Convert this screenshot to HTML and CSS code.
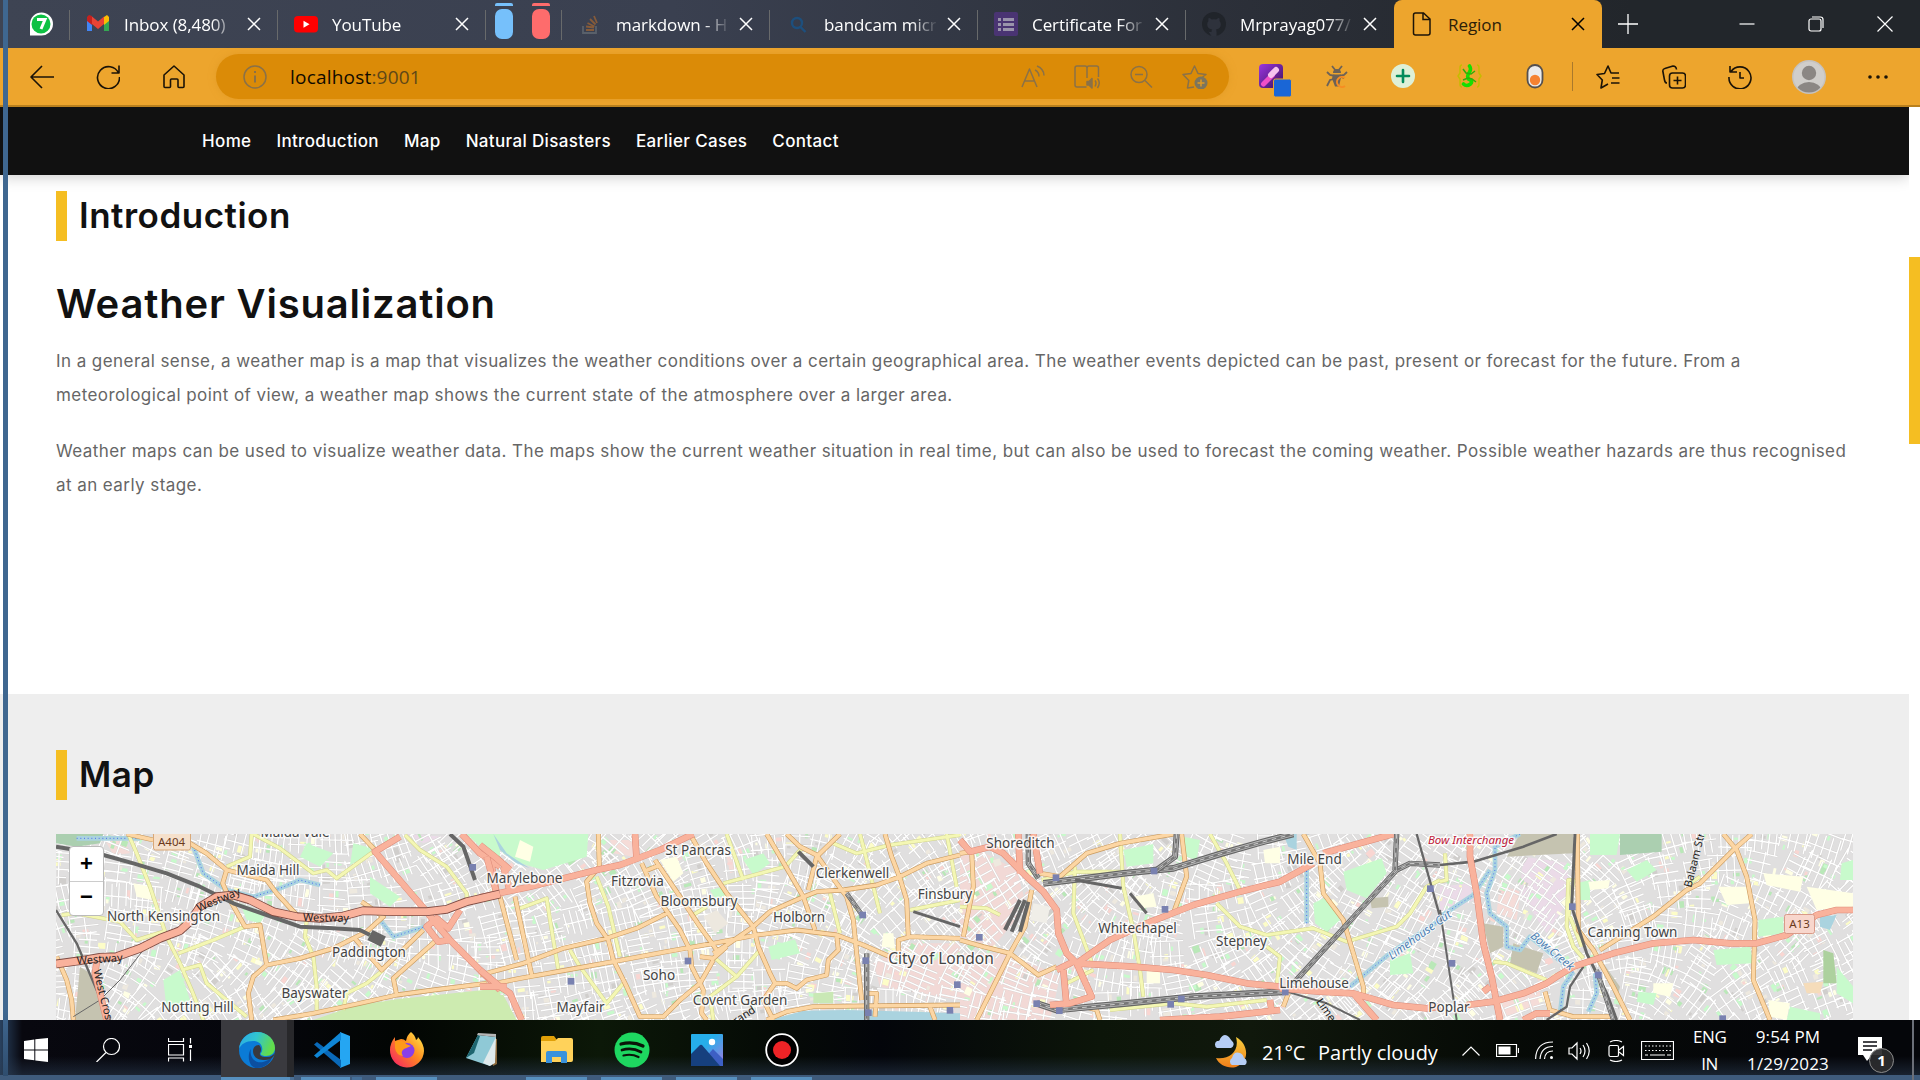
FILE: index.html
```html
<!DOCTYPE html>
<html lang="en">
<head>
<meta charset="utf-8">
<title>Region</title>
<link rel="stylesheet" href="styles.css">
</head>
<body>
<div class="desktop">
  <header class="tabstrip">
    <div class="tab pinned">
      <svg width="26" height="26" viewBox="0 0 26 26"><path d="M2 24.500V13A11.500 11.500 0 1 1 13 24.500Z" fill="#fff"/><circle cx="13" cy="13" r="9.500" fill="#0dc143"/><path d="M9 8.500h8l-4 9.500" fill="none" stroke="#fff" stroke-width="3"/></svg>
    </div>
    <div class="tab">
      <svg class="fav" viewBox="0 0 24 24"><path d="M1 5v14h5V9z" fill="#4285f4"/><path d="M23 5v14h-5V9z" fill="#34a853"/><path d="M18 5l3-2 2 2v4l-5 4z" fill="#fbbc04"/><path d="M1 5l2-2 3 1v9l-5-4z" fill="#c5221f"/><path d="M6 4.500l6 5 6-5V12l-6 5-6-5z" fill="#ea4335"/></svg>
      <span class="title">Inbox (8,480)</span><svg class="close"><use href="#x"/></svg>
    </div>
    <div class="tab">
      <svg class="fav" viewBox="0 0 24 24"><rect y="4" width="24" height="16.500" rx="4" fill="#f00"/><path d="M9.500 8.700v7l6-3.500z" fill="#fff"/></svg>
      <span class="title">YouTube</span><svg class="close"><use href="#x"/></svg>
    </div>
    <div class="tab groups"><i class="pill blue"></i><i class="pill red"></i></div>
    <div class="tab">
      <svg class="fav" viewBox="0 0 24 24" fill="none" stroke-width="1.800"><path d="M5 14v7h13v-7" stroke="#59606a"/><path d="M8 18h8M8 14.500l8 1M9.500 11l7 3.500M12 7l5.500 5.500M16 4l3 7" stroke="#865b3a"/></svg>
      <span class="title">markdown - H</span><svg class="close"><use href="#x"/></svg>
    </div>
    <div class="tab">
      <svg class="fav" viewBox="0 0 24 24" fill="none" stroke="#1d4f7d" stroke-width="2.400"><circle cx="11" cy="11" r="5"/><path d="M14.500 15l5 5"/></svg>
      <span class="title">bandcam micr</span><svg class="close"><use href="#x"/></svg>
    </div>
    <div class="tab">
      <svg class="fav" viewBox="0 0 24 24"><rect width="24" height="24" rx="2" fill="#4a3473"/><path d="M4 6h3v3H4zM9 6h11v3H9zM4 11h3v3H4zM9 11h11v3H9zM4 16h3v3H4zM9 16h11v3H9z" fill="#9a94ab"/></svg>
      <span class="title">Certificate For</span><svg class="close"><use href="#x"/></svg>
    </div>
    <div class="tab">
      <svg class="fav" viewBox="0 0 24 24"><circle cx="12" cy="12" r="12" fill="#20242a"/><path d="M9.500 24v-4c-2 .3-3.500-.5-4-2M14.500 24v-4.500c0-.8-.2-1.500-.7-2 3-.4 5-1.800 5-5 0-1.500-.5-2.500-1.300-3.400.2-.8.2-2-.2-3-1 0-2.200.7-3 1.300a10 10 0 0 0-4.600 0c-.9-.6-2-1.300-3-1.300-.5 1-.5 2.200-.2 3A5 5 0 0 0 5.200 12.500c0 3.200 2 4.600 5 5-.5.500-.7 1.200-.7 2.500V24z" fill="#2e323c"/></svg>
      <span class="title">Mrprayag077/</span><svg class="close"><use href="#x"/></svg>
    </div>
    <div class="tab active">
      <svg class="fav line" viewBox="0 0 24 24"><path d="M3.500 3q0-2 2-2h8l6.500 6v14q0 2-2 2h-12.500q-2 0-2-2zM13 1v6.500h7"/></svg>
      <span class="title">Region</span><svg class="close"><use href="#x"/></svg>
    </div>
    <svg class="newtab" width="22" height="22" viewBox="0 0 22 22"><path d="M11 1v20M1 11h20"/></svg>
    <div class="winbtns">
      <svg width="16" height="16" viewBox="0 0 16 16"><path d="M.5 8h15"/></svg>
      <svg width="16" height="16" viewBox="0 0 16 16"><rect x="1" y="3" width="12" height="12" rx="2"/><path d="M4 1h8.500Q15 1 15 3.500V12"/></svg>
      <svg width="16" height="16" viewBox="0 0 16 16"><path d="M.5.500l15 15m0-15l-15 15"/></svg>
    </div>
  </header>

  <div class="toolbar">
    <svg class="tb" viewBox="0 0 24 24"><path d="M24 12H1M12 1L1 12l11 11"/></svg>
    <svg class="tb" viewBox="0 0 24 24"><path d="M22.500 8A11 11 0 1 0 23.500 12M23 .5V8h-7.500"/></svg>
    <svg class="tb" viewBox="0 0 24 24"><path d="M2 10l10-9 10 9v11.500q0 1-1 1h-4q-1 0-1-1V15q0-1-1-1H9.500q-1 0-1 1v6.500q0 1-1 1H3q-1 0-1-1z"/></svg>
    <div class="address">
      <svg class="ai" viewBox="0 0 24 24"><circle cx="12" cy="12" r="11"/><path d="M12 10.500v7M12 6v2" stroke-width="2"/></svg>
      <span class="url">localhost<span>:9001</span></span>
      <svg class="ai" viewBox="0 0 24 24"><path d="M1 22L8.500 4 16 22M4 16h9.500M14 5q4 2 4 6.500M16 1q7 3 7 9.500"/></svg>
      <svg class="ai wide" viewBox="0 0 26 24"><path d="M12.500 22H3q-2 0-2-2V3q0-2 2-2h8q2 0 2 2v10M13 3q0-2 2-2h7.500q2 0 2 2v9"/><path d="M13 16.500h2l3-3v9.500l-3-3h-2z" fill="#8a7148"/><path d="M21 15.500q2 2.500 0 6M23.500 13.500q3.500 4 0 9.500"/></svg>
      <svg class="ai" viewBox="0 0 24 24"><circle cx="10" cy="9.500" r="8"/><path d="M6 9.500h8M16 15.500l7 7"/></svg>
      <svg class="ai wide" viewBox="0 0 26 24"><path d="M12 22l-6.500 1 1.300-7.500L1 9.500l8-1L12.500 1 16 8.500l8 1-3.500 2.500"/><circle cx="19" cy="18" r="6.500" fill="#7c755e" stroke="none"/><path d="M19 14.500v7M15.500 18h7" stroke="#e09a24"/></svg>
    </div>
    <div class="exts">
      <svg class="ext" viewBox="0 0 34 34"><defs><linearGradient id="pp" x1="0" y1="0" x2="1" y2="1"><stop stop-color="#9b35e0"/><stop offset="1" stop-color="#3c125c"/></linearGradient></defs><rect width="24" height="24" rx="4" fill="url(#pp)"/><path d="M4.500 20l9-9" stroke="#f04fc8" stroke-width="5" stroke-linecap="round"/><path d="M12 11l5-5" stroke="#f5c2ee" stroke-width="6" stroke-linecap="round"/><rect x="14.500" y="15" width="18" height="18" rx="2" fill="#1a66d6" stroke="#eda52d"/></svg>
      <svg class="ext" viewBox="0 0 34 34"><g fill="none" stroke="#6d6257" stroke-width="1.800"><path d="M7 2l4 5M17 2l-4 5M2 8l3 3 5 1M22 8l-3 3-5 1M2 22l3-6 4-1M19 14l-3-1"/></g><path d="M8 9q0-4 4-4t4 4zM8 10.500h8v3l-2 9h-4l-3-8z" fill="#6d6257"/><path d="M20 14a5 5 0 1 0 0 8" fill="none" stroke="#f78d22" stroke-width="2"/></svg>
      <svg class="ext" viewBox="0 0 34 34"><circle cx="12" cy="12" r="12" fill="#def0d8"/><path d="M12 6v12M6 12h12" stroke="#038b5c" stroke-width="2.600" stroke-linecap="round"/></svg>
      <svg class="ext" viewBox="0 0 34 34"><path d="M5 1Q3 1 3 4v5l-2 3 2 3v5q0 3 2 3M20 1q2 0 2 3v5l2 3-2 3v5q0 3-2 3" fill="none" stroke="#c6bb00" stroke-width="1.500"/><path d="M12.500 2q2 3 0 6-3 4-1 7 5 2 2 5-4 3-7 0" fill="none" stroke="#16df00" stroke-width="3.600" stroke-linecap="round"/><path d="M6 5l3 4 5 1 4-3M6 16l5-2 4 1 4 3" fill="none" stroke="#2fae0c" stroke-width="1.500"/></svg>
      <svg class="ext" viewBox="0 0 34 34"><rect x="4.500" y="1" width="15" height="22.500" rx="7.500" fill="#ececec" stroke="#55504e" stroke-width="1.800"/><circle cx="12" cy="16" r="5.200" fill="#f58231"/></svg>
    </div>
    <i class="tbsep"></i>
    <div class="actions">
      <svg class="tb" viewBox="0 0 24 24"><path d="M12 19l-7 4 1.300-8L1 9.500l7.500-1L12 1l3 7h8M16 13h7.500M15 18h8.500"/></svg>
      <svg class="tb" viewBox="0 0 24 24"><rect x="7.500" y="8" width="16" height="15" rx="3"/><path d="M15.500 11.500v8M11.500 15.500h8M5 18Q3 18 2.500 15L.8 6q0-2 2-2.500L11 1q3 0 3.500 3.500"/></svg>
      <svg class="tb" viewBox="0 0 24 24"><path d="M3 6.500A11 11 0 1 1 1 12M2 1v6h7M12 7v6h4"/></svg>
      <svg class="avatar" viewBox="0 0 34 34"><defs><clipPath id="av"><circle cx="17" cy="17" r="15.500"/></clipPath></defs><circle cx="17" cy="17" r="17" fill="#c5c2bf"/><circle cx="17" cy="17" r="15.500" fill="#d0cecb"/><circle cx="17" cy="13" r="7.200" fill="#8b8784"/><ellipse cx="17" cy="31" rx="12.500" ry="9" fill="#8b8784" clip-path="url(#av)"/></svg>
      <svg class="tb dots" viewBox="0 0 24 24"><circle cx="4" cy="12" r="1.800"/><circle cx="12" cy="12" r="1.800"/><circle cx="20" cy="12" r="1.800"/></svg>
    </div>
  </div>

  <main class="viewport">
    <div class="page">
      <nav class="nav"><a>Home</a><a>Introduction</a><a>Map</a><a>Natural Disasters</a><a>Earlier Cases</a><a>Contact</a></nav>
      <section class="intro">
        <h2 class="heading">Introduction</h2>
        <h1>Weather Visualization</h1>
        <p>In a general sense, a weather map is a map that visualizes the weather conditions over a certain geographical area. The weather events depicted can be past, present or forecast for the future. From a meteorological point of view, a weather map shows the current state of the atmosphere over a larger area.</p>
        <p>Weather maps can be used to visualize weather data. The maps show the current weather situation in real time, but can also be used to forecast the coming weather. Possible weather hazards are thus recognised at an early stage.</p>
      </section>
      <section class="mapsec">
        <h2 class="heading">Map</h2>
        <div class="map">
          <svg id="map" width="1797" height="186" viewBox="56 834 1797 186"></svg>
          <div class="zoomctl"><span>+</span><span>−</span></div>
        </div>
      </section>
    </div>
    <div class="scroll"><i></i></div>
  </main>

  <footer class="taskbar">
    <div class="start">
      <svg width="24" height="24" viewBox="0 0 24 24" fill="#fff"><path d="M0 3l10.300-1.500v10H0zM11.300 1.300L24 0v11.500H11.300zM0 12.500h10.300v9.800L0 21zM11.300 12.500H24V24l-12.700-1.500z"/></svg>
      <svg width="24" height="24" viewBox="0 0 24 24" class="w"><circle cx="15.500" cy="8.500" r="8"/><path d="M10 14.500L.5 24"/></svg>
      <svg width="24" height="24" viewBox="0 0 24 24" class="w"><path d="M.5 0v3.500h15V0M.5 6.500h15v10.500h-15zM.5 23.500V20h15v3.500M22.500 0v5.500M22.500 11.500V23"/><path d="M21 7h3v3h-3z" fill="#fff" stroke="none"/></svg>
    </div>
    <div class="apps">
      <div class="app on"><svg viewBox="0 0 36 36"><defs><linearGradient id="e1" x1="0" x2="1" y2=".3"><stop stop-color="#2aa8e8"/><stop offset=".5" stop-color="#31c4d0"/><stop offset="1" stop-color="#62dc4c"/></linearGradient></defs><circle cx="18" cy="18" r="18" fill="#0b7bd6"/><path d="M0 17C1 7 9 0 18 0c11 0 18 8 18 16 0 5-4 8-9 8-5 0-6-2-5-3 3-4 1-12-8-12C7 9 2 12 0 17z" fill="url(#e1)"/><path d="M12 17c-2 8 4 15 12 13 4-1 7-3 9-5-1 6-8 11-15 11C9 36 8 22 12 17z" fill="#0c4fa0"/><path d="M14 19c0-4 3-6 6-6 3 3 2 6 1 8-1 3 3 4 7 4 4 0 6-2 8-4-1 4-4 7-10 7-7 0-12-3-12-9z" fill="#39393d"/></svg></div>
      <div class="app two"><svg viewBox="0 0 36 36"><path d="M26 0l10 4v28l-10 4z" fill="#25a6f2"/><path d="M0 12.500l3-2.500L27 28v8z" fill="#0a69b8"/><path d="M0 23.500L3 26 27 8V0z" fill="#0f86d6"/></svg></div>
      <div class="app"><svg viewBox="0 0 36 36"><defs><linearGradient id="f1" x1="1" y1="0" x2="0" y2="1"><stop stop-color="#fff44f"/><stop offset=".45" stop-color="#ff8a20"/><stop offset="1" stop-color="#f5156c"/></linearGradient></defs><path d="M22 0q4 3 5 8 2-1 2-3 6 7 6 14A17 17 0 0 1 1 18q0-7 5-13v4l6-2q3 0 5 2 1-6 5-9z" fill="url(#f1)"/><circle cx="18" cy="18.500" r="7.500" fill="#8a3fe8"/><path d="M6 9q8-2 11 3l5 2-7 3q-4 3-1 7-7-1-8-8z" fill="#ff9a1a"/></svg></div>
      <div class="app off"><svg viewBox="0 0 36 36"><path d="M27 6l6 1v25l-4 2z" fill="#8c6a3c"/><path d="M14 3l18 2-6 29L2 26z" fill="#8fc9d6"/><path d="M14 3l-12 23 8-5 6-17z" fill="#1d6670"/><path d="M32 5l-1 26-5 3-7-3z" fill="#dfeaec"/><path d="M13 3l19 2v-3L14 1z" fill="#b5b5b5"/></svg></div>
      <div class="app"><svg viewBox="0 0 36 36"><path d="M2 6q0-2 2-2h11l3 4v4H2z" fill="#e0a008"/><path d="M2 9h14l3-3h13q2 0 2 2v20q0 2-2 2H2z" fill="#ffd25a"/><path d="M7 31V21q0-2 2-2h17q2 0 2 2v10h-6v-6h-9v6z" fill="#3a92dc"/></svg></div>
      <div class="app"><svg viewBox="0 0 36 36"><circle cx="18" cy="18" r="17.500" fill="#1ed760"/><g fill="none" stroke="#0a1408" stroke-linecap="round"><path d="M7 12q12-3 22 2" stroke-width="3.200"/><path d="M8 18q10-3 19 2" stroke-width="2.700"/><path d="M9.500 23.500q8-2 15 1.500" stroke-width="2.200"/></g></svg></div>
      <div class="app"><svg viewBox="0 0 36 36"><defs><linearGradient id="ph" x1="0" x2="1" y1="0" y2="1"><stop offset=".4" stop-color="#26aeea"/><stop offset="1" stop-color="#a678e0"/></linearGradient></defs><rect x="2" y="2" width="32" height="32" rx="1" fill="url(#ph)"/><path d="M16 26l8-9 10 10v7H16z" fill="#3d5fc4"/><path d="M2 22l9-9q1-.5 2 0l18 21H2z" fill="#16407e"/><circle cx="23" cy="10" r="3.200" fill="#fff"/></svg></div>
      <div class="app"><svg viewBox="0 0 36 36"><circle cx="18" cy="18" r="15.800" fill="#000" stroke="#fff" stroke-width="1.800"/><circle cx="18" cy="18" r="9" fill="#ee2326"/></svg></div>
    </div>
    <div class="tray">
      <svg width="36" height="34" viewBox="0 0 36 34"><defs><linearGradient id="mo" y2="1" x2="0"><stop stop-color="#f7ce3e"/><stop offset="1" stop-color="#f07e1a"/></linearGradient></defs><path d="M23 3c13 7 14 25 0 30-8 2-17-2-20-9 13 2 24-7 20-21z" fill="url(#mo)"/><path d="M4 14a4 4 0 0 1 0-7q3 0 3-2 4-7 9-2 2 3 3 4a4 4 0 0 1-1 7zM19 31a4 4 0 0 1 0-7q2-7 8-5 3 1 4 5a4 4 0 0 1 1 7z" fill="#b5cdf5"/></svg>
      <span class="temp">21°C</span><span class="cond">Partly cloudy</span>
      <svg class="w" width="18" height="10" viewBox="0 0 18 10"><path d="M.5 9.500L9 1l8.500 8.500"/></svg>
      <svg class="w bat" width="23" height="13" viewBox="0 0 23 13"><path d="M.5.500h20v12H.5zM22.500 4v5"/><path d="M2.500 2.500h12v8h-12z" fill="#fff" stroke="none"/></svg>
      <svg class="w wifi" width="19" height="19" viewBox="0 0 19 19"><path d="M.6 18Q1 1 18 1M5 18Q6 5.500 18 5.500M9.500 18Q10 10 18 10"/><circle cx="16.500" cy="16.500" r="1.500" fill="#fff" stroke="none"/></svg>
      <svg class="w spk" width="23" height="20" viewBox="0 0 23 20"><path d="M1 7h3l5-5v16l-5-5H1zM12 7q2 3 0 6M15 4q4 6 0 12M18.500 2q5.500 8 0 16"/></svg>
      <svg class="w meet" width="17" height="22" viewBox="0 0 17 22"><rect x="1" y="5.500" width="9.500" height="11" rx="1.500"/><path d="M11 10l4.500-3.500v9L11 12M2 2q6-3 12 0M2 20q6 3 12 0"/></svg>
      <svg class="w kb" width="33" height="19" viewBox="0 0 33 19"><path d="M.5.500h32v18H.5z"/><path d="M4 5h26M4 9.500h26" stroke-dasharray="1.500 2"/><path d="M4 14h3M9 14h15M26 14h4"/></svg>
      <div class="stack lang"><span>ENG</span><span>IN</span></div>
      <div class="stack clock"><span>9:54 PM</span><span>1/29/2023</span></div>
      <div class="notif"><svg width="24" height="24" viewBox="0 0 24 24"><path d="M0 0h24v18H14l-5 6-4-6H0z" fill="#fff"/><path d="M5 5h14M5 9h14M5 13h9" stroke="#0a0a0f" stroke-width="1.300"/></svg><b>1</b></div>
    </div>
  </footer>
  <i class="edge"></i>
</div>
<svg width="0" height="0" class="sprite"><symbol id="x" viewBox="0 0 14 14"><path d="M1 1l12 12M13 1L1 13"/></symbol></svg>
<script src="map.js"></script>
</body>
</html>
```
FILE: styles.css
```css
* { box-sizing: border-box; }
body { margin: 0; background: #fff; overflow: hidden; font-family: "Open Sans", "Noto Sans", sans-serif; }
svg { display: block; flex: none; }
.sprite { position: absolute; }
.desktop { position: relative; width: 1920px; height: 1080px; display: flex; flex-direction: column; }

/* tab strip */
.tabstrip { height: 48px; flex: none; display: flex; align-items: stretch; color: #fff; font-size: 17px;
  background: linear-gradient(90deg, #3e4453, #3a4050 35%, #2b2f38 65%, #22262b 85%); }
.tab { width: 208px; display: flex; align-items: center; padding: 0 15px 0 16px; position: relative; }
.tab::after { content: ""; position: absolute; right: 0; top: 10px; height: 30px; width: 1px; background: #686a6b; }
.tab:nth-child(8)::after, .tab.active::after { display: none; }
.tab.pinned { width: 70px; padding: 0 0 0 28px; }
.tab.groups { width: 76px; padding: 9px 9px 9px; gap: 19px; }
.pill { width: 18px; height: 30px; border-radius: 7px; position: relative; background: currentColor; }
.pill::before { content: ""; position: absolute; left: 0; right: 0; top: -6px; height: 3px; border-radius: 2px 2px 0 0; background: currentColor; }
.pill.blue { color: #76c0fb; }
.pill.red { color: #fe6c6c; }
.fav { width: 24px; height: 24px; margin-right: 14px; }
.title { width: 112px; white-space: nowrap; letter-spacing: -.08px; -webkit-mask-image: linear-gradient(90deg, #000 78%, transparent 102%); }
.close { width: 14px; height: 14px; margin-left: auto; margin-right: 2px; fill: none; stroke: currentColor; stroke-width: 1.500; }
.tab.active { background: #eda52d; color: #000; border-radius: 8px 8px 0 0; }
.tab.active .title { -webkit-mask-image: none; color: #2c2008; }
.line { fill: none; stroke: #1c1408; stroke-width: 1.500; }
.newtab { margin: 13px 0 0 15px; fill: none; stroke: #fff; stroke-width: 1.300; }
.winbtns { margin-left: auto; margin-right: 27px; display: flex; gap: 53px; align-items: center; fill: none; stroke: #fff; stroke-width: 1.200; }

/* toolbar */
.toolbar { height: 59px; flex: none; display: flex; align-items: center; background: #eda52d; border-bottom: 2px solid #b9801e; padding: 0 30px; }
.toolbar > * { flex: none; }
.tb { width: 24px; height: 24px; fill: none; stroke: #1b1307; stroke-width: 1.600; stroke-linejoin: round; margin-right: 42px; }
.address { width: 1013px; height: 45px; margin-left: -12px; border-radius: 23px; background: #db8b07; box-shadow: 0 0 7px #d9922088; display: flex; align-items: center; padding: 0 21px 0 27px; }
.ai { width: 24px; height: 24px; fill: none; stroke: #8a7148; stroke-width: 1.500; margin-left: 29px; stroke-linejoin: round; }
.ai:first-child { margin-left: 0; }
.ai.wide { width: 26px; }
.url { font-size: 19px; letter-spacing: .2px; color: #100a00; margin: 0 auto 0 23px; }
.url span { color: #5f4717; }
.exts { display: flex; gap: 32px; margin-left: 30px; }
.ext { width: 34px; height: 34px; margin-top: 9px; }
.tbsep { width: 1px; height: 29px; background: #a9792c; margin-left: 15px; }
.actions { display: flex; align-items: center; margin-left: 23px; }
.actions .tb:nth-child(3) { margin-right: 40px; }
.avatar { width: 34px; height: 34px; margin-right: 40px; }
.dots { fill: #1b1307; stroke: none; margin: 0; }
.actions .dots { margin: 0; }

/* page */
.viewport { height: 913px; flex: none; display: flex; overflow: hidden; font-family: Inter, sans-serif; }
.page { width: 1909px; display: flex; flex-direction: column; }
.nav { height: 68px; flex: none; background: #111; box-shadow: 0 2px 14px #0003; display: flex; align-items: center; gap: 25px; padding: 0 0 1px 202px; color: #fff; font-size: 17px; font-weight: 500; letter-spacing: .35px; }
.intro { height: 519px; flex: none; padding: 16px 56px 0; }
.heading { margin: 0; height: 50px; line-height: 49px; border-left: 11px solid #f5be22; padding-left: 12px; font-size: 35px; font-weight: 600; letter-spacing: .5px; color: #111; }
h1 { margin: 39px 0 16px; font-size: 40px; line-height: 48px; font-weight: 600; letter-spacing: .8px; color: #111; }
.intro p { margin: 0 -2px 22px 0; color: #666; font-size: 17px; line-height: 34px; letter-spacing: .43px; }
.mapsec { flex: 1; background: #eee; padding: 56px 56px 0; }
.map { position: relative; margin-top: 34px; height: 186px; overflow: hidden; background: #e0dfdf; }
.map text { font-family: "Noto Sans", sans-serif; font-size: 13.500px; fill: #444; stroke: #fffc; stroke-width: 3px; paint-order: stroke; stroke-linejoin: round; text-anchor: middle; }
.map text.city { font-size: 15.500px; }
.map text.ref { font-size: 11px; fill: #222; stroke: none; }
.map text.water { font-size: 11.500px; fill: #4d80b3; font-style: italic; stroke-width: 2px; }
.map text.jct { font-size: 11.500px; fill: #c0203a; font-style: italic; }
.map text.shield { font-size: 11.500px; fill: #6b3a1c; stroke: none; }
.zoomctl { position: absolute; left: 13px; top: 12px; width: 35px; border: 1px solid #bbb; border-radius: 4px; overflow: hidden; background: #fff; font: bold 22px/33px "Liberation Sans", sans-serif; text-align: center; color: #000; }
.zoomctl span { display: block; height: 34px; }
.zoomctl span + span { border-top: 1px solid #ccc; line-height: 30px; }
.scroll { width: 11px; background: #fff; padding-top: 150px; }
.scroll i { display: block; height: 187px; background: #f5be22; }

/* taskbar */
.taskbar { height: 60px; flex: none; display: flex; color: #fff;
  background: linear-gradient(transparent 60%, #2a3a5088 91%, #3f5b7c 92%), linear-gradient(90deg, #29415e, #08080f 22px, #05060c 260px, #020503 400px, #0c1808 600px, #050a06 780px, #03050a 880px, #0c1509 1100px, #10180c 1250px, #060a06 1500px, #05060a 1800px); }
.w { fill: none; stroke: #fff; stroke-width: 1.200; }
.start { width: 221px; display: flex; gap: 48px; padding: 18px 0 0 24px; }
.apps { display: flex; gap: 14px; }
.app { width: 61px; display: flex; justify-content: center; padding-top: 12px; border-bottom: 3px solid #5790bf; }
.app svg { width: 36px; height: 36px; }
.app.off { border-color: transparent; }
.app.on { width: 73px; background: linear-gradient(90deg, #3a3a3f 66px, #28282b 66px); padding-right: 1px; margin-right: -7px; border-image: linear-gradient(90deg, #5790bf 66px, #4a6f95 66px) 3; }
.app.two { border-image: linear-gradient(90deg, #5790bf 47px, #3f5b7c 47px 49px, #456f99 49px) 3; }
.tray { margin-left: auto; width: 699px; display: flex; align-items: center; font-size: 20px; }
.tray > svg { margin-top: 1px; }
.temp { margin-left: 13px; width: 56px; padding-top: 4px; letter-spacing: -.2px; }
.cond { width: 144px; padding-top: 4px; }
.bat { margin-left: 16px; }
.wifi { margin-left: 16px; }
.spk { margin-left: 14px; }
.meet { margin-left: 17px; }
.kb { margin-left: 16px; }
.stack { display: flex; flex-direction: column; text-align: center; font-size: 17px; line-height: 27px; margin-top: -1px; }
.lang { width: 33px; margin-left: 19px; letter-spacing: -.4px; }
.clock { width: 84px; margin-left: 20px; letter-spacing: .15px; }
.notif { position: relative; margin-left: 28px; margin-top: -3px; }
.notif b { position: absolute; left: 11px; top: 11px; width: 25px; height: 25px; border-radius: 50%; background: #2b2b2ded; border: 1px solid #8b8b8b; font-size: 15px; line-height: 23px; text-align: center; }
.taskbar::after { content: ""; width: 2px; background: #6b6f78; margin: 0 6px 0 0; }
.edge { position: absolute; left: 3px; top: 0; width: 5px; height: 1076px; background: linear-gradient(#3f6790 94%, #2f4d6e); }
```
FILE: map.js
```javascript
// Street map of central and east London, drawn as layered SVG strokes.
// Each sheet has its own origin; sheet units are a third of a map pixel.
const SHEETS = [
  { x: 0, y: 680,
    areas: [
      ['#abcfb0', '168,462 310,462 300,490 230,500 168,490'], ['#f5dcd8', '310,470 370,470 390,520 340,525'],
      ['#cdebb0', '940,1020 1060,978 1190,958 1500,925 1500,1020'], ['#c5c3b0', '240,860 300,900 325,1020 225,1020'],
      ['#ebdbe8', '1220,462 1330,470 1270,490'], ['#c8facc', '1060,490 1100,500 1120,520 1050,555'],
      ['#c8facc', '920,490 1000,520 960,560 900,530'], ['#c8facc', '720,670 800,700 780,730 740,720'],
      ['#c8facc', '1110,590 1200,650 1170,680 1110,640'], ['#ffffe5', '400,610 450,620 455,660 410,650'],
      ['#c8facc', '490,900 540,870 570,960 500,990'], ['#c8facc', '1400,462 1500,462 1500,540 1440,500']],
    water: ['580,500 610,580 680,630 760,650 840,625 900,600 960,615', '1140,720 1180,770 1290,735', '230,475 420,475'],
    rail: [[12, '168,500 300,522 400,550 500,580 600,620 700,670 800,705 900,740 1000,745 1080,750 1110,765'], [34, '1110,765 1150,785'], [7, '168,690 230,790 290,930 330,1020'], [3, '220,1010 300,960 360,900 430,810'], [12, '1350,462 1390,500 1425,600']],
    yellow: ['385,462 410,520 450,620 500,770 540,850 575,930 610,1020', '185,705 230,700 360,725 410,780 490,755', '535,820 640,780 735,740', '545,870 600,855 620,910 680,960 740,1010', '755,462 750,530 680,560', '760,462 840,505 940,580 980,570 1010,595 1120,515', '1215,465 1260,510 1340,560 1400,640 1400,660', '920,720 915,770 940,830 950,920 950,1000', '1150,870 1100,910 1040,940 1030,990'],
    orange: ['380,462 460,480', '570,490 620,520 680,570 800,600 830,640 890,705', '680,570 668,610 690,660 735,740 780,735 800,855', '800,855 900,835 1000,805 1100,755 1150,710 1085,665', '800,855 760,890 745,940 755,1020', '820,1020 940,1000 1080,970 1190,945 1300,930 1460,910', '1080,462 1130,515', '1060,770 1145,870 1270,750', '1310,780 1180,895 1190,945', '170,830 200,900 215,960 220,1020'],
    red: ['168,852 240,842 300,832 350,830 420,805 480,775 540,752 570,725 600,680 650,650 700,645 750,660 820,695 890,710 960,715 1030,708 1090,692 1180,695 1280,695 1340,688 1400,665 1500,642', '292,835 285,880 300,940 320,1020', '1200,470 1125,515 1280,695 1315,740 1350,780 1420,850 1480,910 1500,930', '1385,462 1440,520 1500,560', '1470,530 1490,640', '1350,780 1315,785 1280,740 1310,715 1345,745 1380,690'],
    stations: ['1418,562'] },
  { x: 480, y: 820,
    areas: [
      ['#c8facc', '20,42 325,42 320,110 190,150 120,130 70,100'], ['#aad3df', '40,42 80,100 125,130 150,145 110,130 60,90'],
      ['#ffffe5', '120,60 160,80 150,125 105,110'], ['#cdebb0', '0,525 70,525 110,600 0,600'],
      ['#c8facc', '865,380 945,358 960,400 875,420'], ['#c8facc', '690,210 730,200 740,225 705,235'],
      ['#c8facc', '790,120 850,100 870,130 820,165'], ['#ffffe5', '540,120 590,110 610,160 580,185'],
      ['#ede8df', '670,290 710,270 745,310 705,340'], ['#aad3df', '870,600 970,572 1100,570 1300,575 1440,580 1440,602 870,602'],
      ['#c9e8b5', '1000,520 1060,515 1060,550 1000,550'], ['#f5dcd8', '740,110 770,105 780,150 750,160'],
      ['#ffffe5', '1210,340 1240,340 1245,385 1205,380'], ['#f2d9d6', '1290,370 1440,370 1440,540 1200,500 1180,430'], ['#f5dcd8', '390,60 460,60 460,110 400,100']],
    water: [], rail: [[14, '1100,220 1150,290'], [16, '1160,400 1160,600'], [9, '1300,275 1440,320'], [12, '955,95 1000,140']],
    yellow: ['350,170 385,260 420,410', '120,265 200,235 210,300 235,450', '270,390 300,440 380,550 430,490', '700,410 770,470 840,390', '770,470 690,530 700,600', '740,42 790,180', '730,190 915,140 970,80', '1050,220 1080,340', '1060,70 1130,100 1230,75 1440,45', '1140,42 1155,100 1200,280', '1400,42 1430,200', '1290,270 1440,240', '630,290 680,260'],
    orange: ['355,42 358,140 320,185 330,250 350,310 385,360 400,420 440,500 480,590 550,590 600,540 660,490 700,420', '485,130 530,230 600,330 630,390 635,440 670,510 665,580 680,600', '525,120 600,230 660,320 710,390', '490,155 540,135', '630,42 680,130 740,220 820,320 835,380 870,460 885,490', '0,465 130,430 250,385 380,355 470,325 560,280', '0,500 120,475 260,450 400,425 560,395 700,370 830,345 950,330 1070,345 1150,375 1230,410', '700,400 740,375 820,320 870,275 960,235 1010,215 1090,210 1190,195 1260,170 1340,130 1440,105', '860,42 900,110 970,230 1005,330', '920,42 960,80 1010,105 1070,190 1100,230 1120,300 1130,400 1145,540', '1080,42 1010,110 985,210', '1215,42 1235,110 1260,175 1280,240 1285,350', '1440,355 1290,350 1255,360 1255,410', '880,600 850,540 885,490 920,490 950,505 980,480 1040,465 1045,420 1075,390 1070,345', '860,600 920,575 1000,560 1140,558 1440,555', '60,230 110,420', '105,230 155,465', '660,410 700,415 740,380', '1350,560 1365,600', '1165,520 1190,520 1185,590'],
    red: ['0,232 150,200 270,170 350,150 420,135 540,90 640,42', '0,75 50,115 90,150', '20,110 50,220', '70,140 90,215', '465,42 470,120', '0,450 60,500 90,520 125,600', '0,500 80,500'],
    stations: ['1148,285', '624,423', '1157,422', '273,484', '1432,494', '1165,578', '1410,571'] },
  { x: 960, y: 820,
    areas: [
      ['#f2d9d6', '0,400 150,400 300,470 270,600 0,600'], ['#f2d9d6', '0,60 170,150 200,260 100,380 0,350'],
      ['#c8facc', '1150,155 1265,115 1280,160 1220,235 1160,210'], ['#c8facc', '490,90 580,72 580,130 500,140'],
      ['#c8facc', '1060,250 1100,230 1140,300 1100,335 1065,310'], ['#c5c3b0', '1230,235 1285,230 1285,260 1235,265'],
      ['#ffffe5', '520,230 580,220 590,260 540,265'], ['#ffffe5', '910,90 960,80 960,130 915,130'],
      ['#aad3df', '970,42 1010,42 1010,90 985,80'], ['#c8facc', '670,50 720,60 710,120 680,110'],
      ['#c8facc', '1290,420 1350,400 1360,460 1290,465'], ['#ffffe5', '560,450 600,450 600,490 560,490'], ['#f0eee8', '220,250 270,260 260,310 210,300']],
    water: ['1040,120 1040,310', '1170,500 1290,400 1440,300'],
    rail: [[16, '205,42 205,130 235,175'], [20, '250,190 350,178 490,160 640,145 780,102 900,68 1000,42'], [18, '650,42 645,110 590,150'], [9, '345,180 485,205'], [9, '510,220 560,280'], [12, '180,240 135,330'], [12, '195,240 155,335'], [12, '205,245 180,335'], [20, '230,550 290,570 500,550 700,530 980,515'], [16, '1000,490 1100,380 1200,270 1310,150 1350,130 1440,135'], [16, '1310,42 1305,150'], [7, '1370,42 1440,290'], [6, '980,515 1100,550 1200,600']],
    yellow: ['480,42 490,200 520,330 540,450 550,530', '345,140 340,280 385,400 400,440', '245,180 350,155 490,155', '750,42 800,130 840,210', '770,250 840,320 920,345 1060,325 1160,365 1310,320 1350,280 1400,200 1440,180', '920,380 960,410 950,500', '0,260 80,265 120,285', '450,570 640,550 740,560 920,540', '320,490 400,450'],
    orange: ['0,100 35,95 40,200 10,350', '0,360 70,380 150,400 235,465 290,440', '150,400 90,520 50,600', '150,400 195,320 215,210', '240,160 300,170 380,100 480,70 640,42', '665,42 680,170 640,280', '1030,42 1080,130 1090,220 1150,300 1180,400 1210,500 1210,530', '375,560 410,570 420,600', '985,520 970,560'],
    red: ['0,60 30,95 90,80 130,100 200,170 250,215 290,270 295,340 320,400 350,430 395,530 330,550 270,555', '175,42 180,160', '220,42 240,160', '350,430 450,360 560,310 700,255 840,215 960,185 1060,130', '1090,100 1180,75 1300,42', '290,450 350,420', '350,430 520,440 640,450 740,465 860,490 960,500', '960,505 1080,515 1180,520 1300,555 1400,565 1440,560', '1180,520 1250,600', '310,450 320,560', '600,600 780,590 960,570', '930,540 935,575'],
    stations: ['288,173', '582,153', '615,268', '58,352', '230,551', '298,572', '632,553', '664,537', '976,516', '1411,206'] },
  { x: 1440, y: 820,
    areas: [
      ['#ebdbe8', '0,200 90,190 100,240 0,290'], ['#ebdbe8', '250,110 385,130 380,250 320,340 240,220'],
      ['#c5c3b0', '240,42 400,42 400,100 200,110'], ['#c5c3b0', '130,310 190,320 190,380 150,400'], ['#c5c3b0', '220,370 310,400 290,460 210,430'],
      ['#f5dcd8', '180,180 240,230 230,300 170,280'], ['#abcfb0', '540,42 665,42 665,95 540,105'], ['#c8facc', '450,42 540,42 530,105 450,105'],
      ['#c8facc', '560,150 620,120 650,150 590,185'], ['#ffffe5', '835,200 930,200 930,250 860,255'], ['#ffffe5', '970,160 1090,170 1080,215 980,195'],
      ['#ffffe5', '1100,200 1240,220 1240,260 1130,270'], ['#c8facc', '820,390 930,380 940,430 830,435'], ['#c8facc', '955,300 1030,290 1030,340 955,350'],
      ['#aad3df', '1140,290 1190,285 1170,330 1140,320'], ['#add19e', '1150,390 1180,400 1190,490 1150,490'], ['#c8facc', '1190,440 1240,500 1240,550 1190,520'],
      ['#f5dcba', '1090,490 1150,485 1140,520 1100,520'], ['#ffffe5', '640,490 700,490 690,530 640,520'], ['#c8facc', '595,515 650,520 640,555 590,545'],
      ['#ffffe5', '985,540 1050,550 1040,600 990,590'], ['#c8facc', '1050,560 1140,580 1140,600 1040,600'], ['#c8facc', '410,190 450,180 450,240 410,240'],
      ['#c8facc', '1205,130 1240,120 1240,180 1200,180'], ['#ffffe5', '445,185 510,180 505,205 450,210'], ['#f5dcd8', '170,540 300,515 300,560 190,590'],
      ['#c5c3b0', '490,430 540,500 530,540 500,470']],
    water: ['240,42 165,80 165,150 140,220 150,280 200,320 200,380 240,390 270,350 370,430', '400,455 370,500 360,580', '465,460 470,520 445,575', '0,290 100,225 150,150'],
    rail: [[8, '0,135 100,125 250,80 350,42'], [9, '405,42 395,260 440,400 500,520 530,600'], [7, '430,440 390,500 380,560 320,600'], [6, '0,270 50,600'], [14, '470,450 520,600']],
    yellow: ['385,290 400,180 385,180 380,320 400,380 430,415', '390,290 425,380', '0,185 20,180 15,100', '160,425 200,430 320,480', '750,190 780,170'],
    orange: ['850,42 890,90 920,170 945,300 940,480 990,600', '935,42 880,90 780,190 740,210 640,290 480,390', '412,42 415,330 460,390 520,500 570,600', '315,515 330,570 400,590 520,590'],
    red: ['90,42 90,110 110,220 130,370 155,470 180,600', '80,555 160,545 250,520 320,490 350,470 400,440 520,400 640,370 760,360 870,370 950,370 1040,345 1130,285 1190,270 1240,270', '250,600 290,580 330,580', '130,515 150,500'],
    stations: ['397,260', '36,430', '475,465', '848,596'] }
];

// [text, x, y, style, rotation]
const LABELS = [
  ['Maida Vale', 295, 837], ['Maida Hill', 268, 875], ['North Kensington', 163.500, 921], ['Paddington', 369, 956.500], ['Bayswater', 314.500, 997.500], ['Notting Hill', 197.500, 1012],
  ['Marylebone', 524.500, 883], ['St Pancras', 698, 855], ['Fitzrovia', 637.500, 886], ['Bloomsbury', 699, 906], ['Clerkenwell', 852.500, 878], ['Finsbury', 945, 898.500], ['Holborn', 799, 922], ['Soho', 659, 980], ['City of London', 941, 964, 'city'], ['Covent Garden', 740, 1005], ['Mayfair', 580.500, 1011.500],
  ['Shoreditch', 1020.500, 847.500], ['Mile End', 1314.500, 864], ['Whitechapel', 1137.500, 932.500], ['Stepney', 1241.500, 945.500], ['Limehouse', 1314, 988], ['Poplar', 1449, 1012], ['Canning Town', 1632.500, 937],
  ['Westway', 220, 903, 'ref', -23], ['Westway', 326, 921.500, 'ref', 1], ['Westway', 100, 963, 'ref', -4], ['West Cross', 100, 998, 'ref', 76], ['Strand', 742, 1021, 'ref', -33], ['Balaam Street', 1700, 853, 'ref', -76], ['Lime', 1323, 1012, 'ref', 55],
  ['Limehouse Cut', 1422, 938, 'water', -36], ['Bow Creek', 1550, 954, 'water', 40], ['Bow Interchange', 1471, 844, 'jct'],
  ['A404', 171.500, 845.500, 'shield'], ['A13', 1799.500, 928, 'shield']
];

let seed = 11;
const rnd = () => (seed = (seed * 16807) % 2147483647) / 2147483647;
const line = (d, stroke, w, extra = '') => `<path d="${d}" fill="none" stroke="${stroke}" stroke-width="${w}" stroke-linejoin="round" ${extra}/>`;
const poly = pts => 'M' + pts.split(' ').join('L');
const f = n => n.toFixed(1);

// Residential street grid: small rotated blocks of parallel streets with cross streets.
function streets() {
  let d = '', patches = '';
  const tints = ['#ffffe5', '#fdfdc8', '#c8facc', '#c8facc', '#b9e8b8', '#f9d6d2', '#eee9df', '#d0cecc'];
  for (let gy = 838; gy < 1030; gy += 27) for (let gx = 50; gx < 1870; gx += 31) {
    const cx = gx + rnd() * 12, cy = gy + rnd() * 10;
    const a = Math.sin(gx / 130) * 0.7 + Math.cos(gy / 60 + gx / 210) * 0.5 + (rnd() - 0.5) * 0.25;
    const c = Math.cos(a), s = Math.sin(a), P = (u, v) => f(cx + u * c - v * s) + ',' + f(cy + u * s + v * c);
    for (let k = 0; k < 4; k++) {
      const u = rnd() * 30 - 15, v = rnd() * 26 - 13, w = 2 + rnd() * 6, h = 2 + rnd() * 6;
      patches += `<path d="M${P(u, v)}L${P(u + w, v)}L${P(u + w, v + h)}L${P(u, v + h)}z" fill="${tints[Math.floor(rnd() * tints.length)]}"/>`;
    }
    const step = 6 + rnd() * 3.5, flip = rnd() > 0.5;
    for (let t = -15; t < 16; t += step) {
      const e0 = -9 - rnd() * 8, e1 = 9 + rnd() * 8;
      d += flip ? `M${P(t, e0)}L${P(t + rnd() * 2, e1)}` : `M${P(e0, t)}L${P(e1, t + rnd() * 2)}`;
    }
    for (const t of [-13, 2]) d += flip ? `M${P(-17, t)}L${P(17, t)}` : `M${P(t, -17)}L${P(t, 17)}`;
  }
  return [patches, line(d, '#cfcdcc', 2) + line(d, '#fff', 1.4)];
}

const sheet = (s, body) => `<g transform="translate(${s.x} ${s.y}) scale(.33333)">${body}</g>`;
const layer = fn => SHEETS.map(s => sheet(s, fn(s))).join('');
const all = list => list.map(poly).join('');
const built = c => ['#f2d9d6', '#f5dcd8', '#ebdbe8'].includes(c);
const fills = (s, test) => s.areas.filter(([c]) => test(c)).map(([c, p]) => `<path d="${poly(p)}z" fill="${c}"/>`).join('');

const [patches, grid] = streets();
let out = layer(s => fills(s, built)) + patches + grid;
out += layer(s => fills(s, c => !built(c)));
out += layer(s => line(all(s.water), '#aad3df', 14) + line(all(s.water), '#4a6cf0', 3, 'stroke-dasharray="3 8"'));
out += layer(s => line(all(s.yellow), '#cfd28c', 12) + line(all(s.yellow), '#f4f7b4', 9));
out += layer(s => line(all(s.orange), '#c9995c', 14.5) + line(all(s.orange), '#fcd6a4', 11));
out += layer(s => s.rail.map(([w, p]) => line(poly(p), '#666', w) + (w > 12 && w < 30 ? line(poly(p), '#bbb', w * 0.65) + line(poly(p), '#777', w * 0.4) + line(poly(p), '#ddd', 2.5, 'stroke-dasharray="14 14"') : '')).join(''));
out += layer(s => line(all(s.red), '#dd8a78', 20) + line(all(s.red), '#f9b29c', 17));
out += sheet(SHEETS[0], line(poly(SHEETS[0].red[0]), '#7d4a42', 26) + line(poly(SHEETS[0].red[0]), '#f9b29c', 21));
out += layer(s => s.stations.map(p => { const [x, y] = p.split(','); return `<rect x="${x - 10}" y="${y - 10}" width="20" height="20" fill="#7981b0"/>`; }).join(''));
out += '<rect x="153.500" y="828" width="37" height="22" rx="2" fill="#f5e0cb" stroke="#d9a877"/><rect x="1784.500" y="914.500" width="30" height="19" rx="2" fill="#f8d6cc" stroke="#d99a88"/>';
out += LABELS.map(([t, x, y, c = 'place', r = 0]) => `<text x="${x}" y="${y}" class="${c}" transform="rotate(${r} ${x} ${y})">${t}</text>`).join('');
document.getElementById('map').innerHTML = out;
```
